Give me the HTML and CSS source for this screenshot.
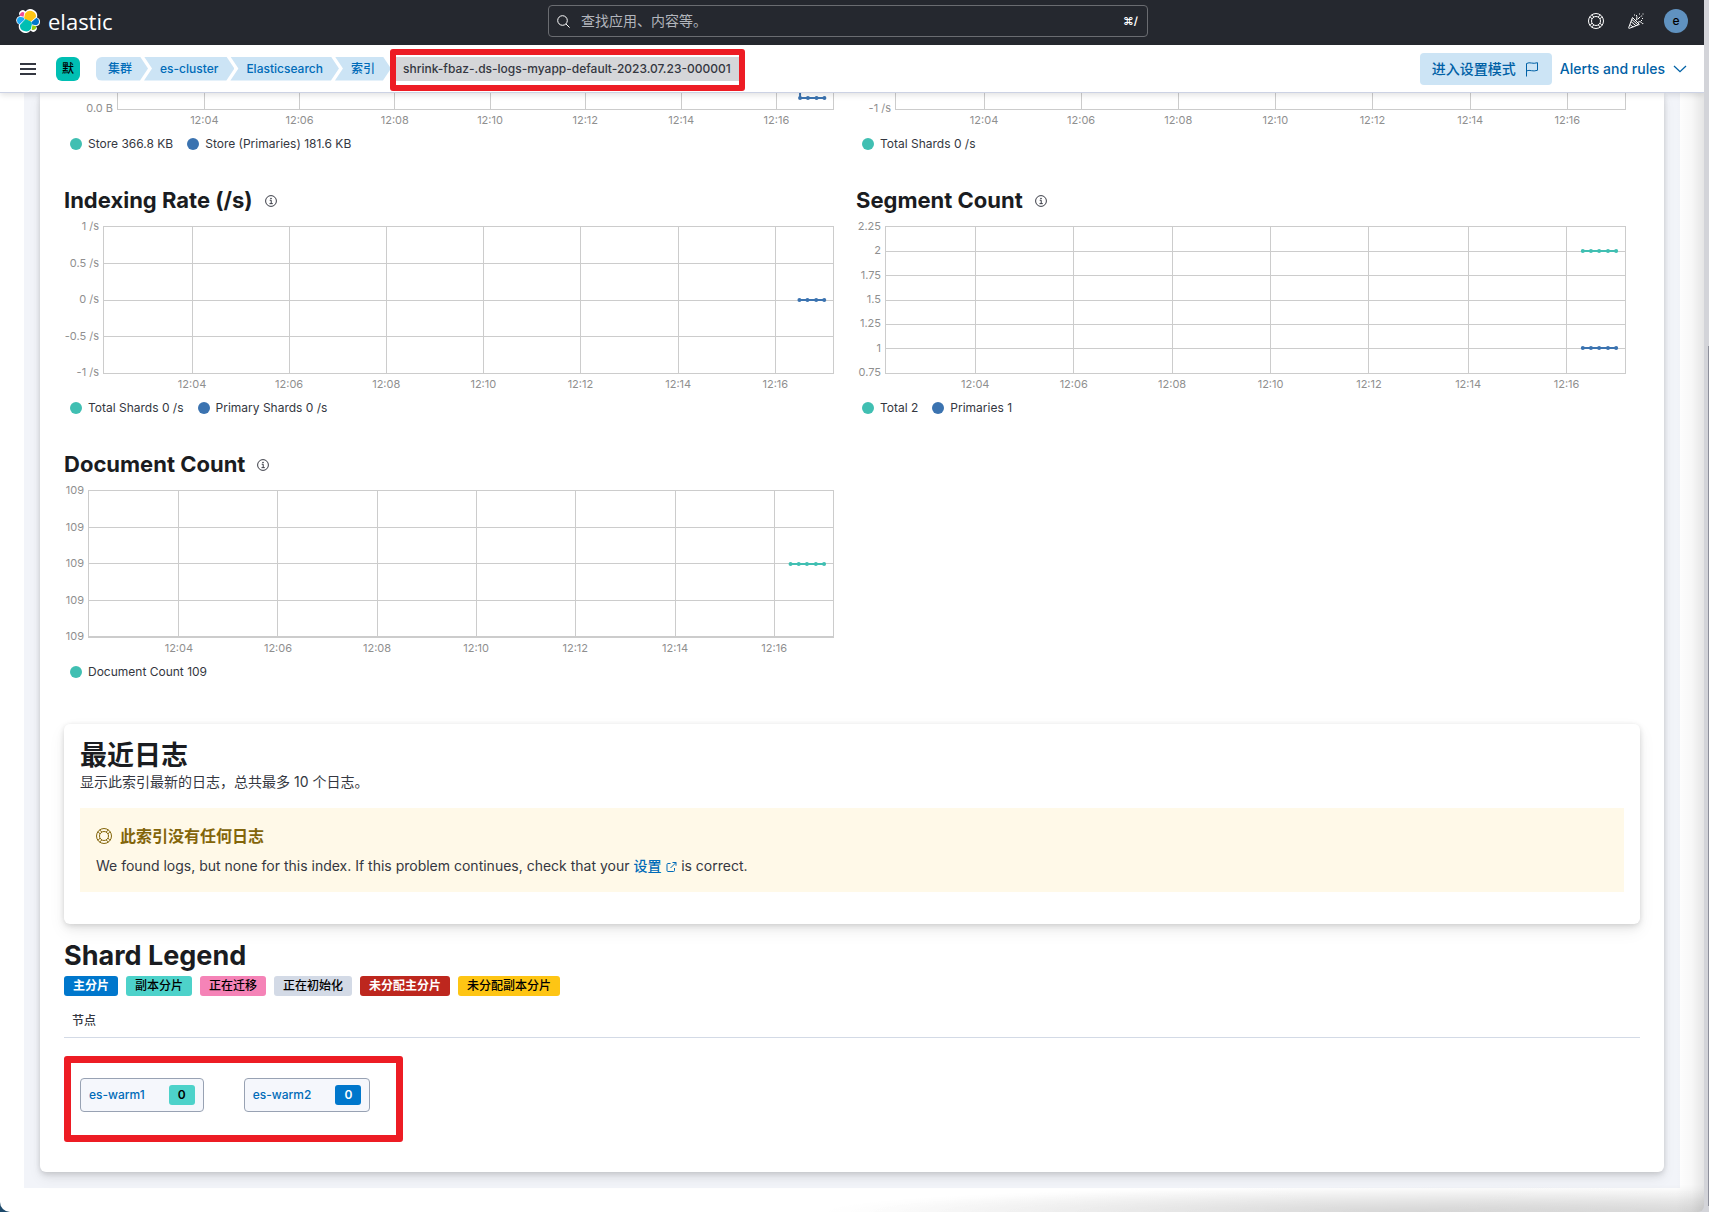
FILE: index.html
```html
<!DOCTYPE html>
<html lang="zh-CN">
<head>
<meta charset="utf-8">
<title>Elasticsearch - 索引</title>
<link rel="stylesheet" href="styles.css">
</head>
<body>
<svg class="defs" aria-hidden="true">
  <symbol id="info" viewBox="0 0 16 16"><path fill="none" stroke="currentColor" stroke-width="1.3" d="M8 .8a7.200 7.200 0 1 1 0 14.400A7.200 7.200 0 0 1 8 .8M6.3 7h2v4.4M6 11.5h4.4"/><circle cx="8" cy="4.6" r="1.1" fill="currentColor"/></symbol>
  <symbol id="help" viewBox="0 0 16 16"><g fill="none" stroke="currentColor"><circle cx="8" cy="8" r="7.5"/><circle cx="8" cy="8" r="4.500"/><path d="M4.200 6L2 3.700M6 4.200L3.700 2M11.800 6L14 3.700M10 4.200L12.300 2M4.200 10L2 12.300M6 11.800L3.700 14M11.800 10l2.200 2.300M10 11.800l2.300 2.200"/></g></symbol>
  <symbol id="vgrid" overflow="visible">
    <line x1="12.2%" x2="12.2%" y1="0" y2="148"/><line x1="25.5%" x2="25.5%" y1="0" y2="148"/><line x1="38.8%" x2="38.8%" y1="0" y2="148"/><line x1="52.1%" x2="52.1%" y1="0" y2="148"/><line x1="65.4%" x2="65.4%" y1="0" y2="148"/><line x1="78.8%" x2="78.8%" y1="0" y2="148"/><line x1="92.1%" x2="92.1%" y1="0" y2="148"/>
  </symbol>
</svg>

<div class="window">
<header class="topbar">
  <a class="brand" href="#">
    <svg width="24" height="24" viewBox="0 0 32 32" aria-hidden="true">
      <path fill="#fff" d="M32 16.8a6 6 0 0 0-4-5.6A9 9 0 0 0 12.500 3.200 4.600 4.600 0 0 0 5.400 9.200a6 6 0 0 0-1.400 11.500A9 9 0 0 0 19.500 28.800a4.600 4.600 0 0 0 7.100-5.900A6 6 0 0 0 32 16.800"/>
      <path fill="#fec514" d="M12.600 13.800l7 3.200 7.100-6.200a7.900 7.900 0 0 0-14.700-4.500l-1.200 6z"/>
      <path fill="#00bfb3" d="M5.300 21.200a7.900 7.900 0 0 0 14.800 4.500l1.200-6.100-1.600-3-7-3.200z"/>
      <path fill="#f04e98" d="M5.300 9.100l4.800 1.100 1-5.400a3.800 3.800 0 0 0-5.800 4.300"/>
      <path fill="#1ba9f5" d="M4.900 10.200a5.300 5.300 0 0 0-.2 10l6.700-6.100-1.200-2.700z"/>
      <path fill="#93c90e" d="M20.900 27.200a3.800 3.800 0 0 0 5.800-4.300l-4.800-1.100z"/>
      <path fill="#07c" d="M21.800 20.500l5.300 1.300a5.300 5.300 0 0 0 .2-10l-6.900 6z"/>
    </svg>
    <span>elastic</span>
  </a>
  <label class="search">
    <svg width="13" height="13" viewBox="0 0 13 13" fill="none" stroke="currentColor" aria-hidden="true"><circle cx="5.500" cy="5.500" r="4.800"/><path d="M9 9l3.600 3.600"/></svg>
    <input type="search" aria-label="查找" placeholder="查找应用、内容等。">
    <kbd>⌘/</kbd>
  </label>
  <div class="tools">
    <button type="button" aria-label="帮助"><svg width="16" height="16" aria-hidden="true"><use href="#help"/></svg></button>
    <button type="button" aria-label="新闻"><svg width="16" height="16" viewBox="0 0 16 16" fill="none" stroke="currentColor" aria-hidden="true"><path d="M4.500 4.500L.7 14.600c-.2.600.2.900.7.700l10-3.900zM3 8.600l5 4.200M2 11.500l3.200 2.600M3.800 6.400l6.300 5.700M6.500 6.500l3 3M8 7.500c1-1.500 1.300-3.500.3-5.500M10 9.200c1.500-.8 3-.6 3.500.5s1.500 1.200 2 .3M9.500 6.500l2.800-2.800"/><path d="M11 1h1M14.500 1h1M13.200 3h1M14 5.500h1M6 2h1M13 7.500h1"/></svg></button>
    <button type="button" class="avatar">e</button>
  </div>
</header>

<div class="subbar">
  <button type="button" class="menu" aria-label="菜单"><i></i><i></i><i></i></button>
  <button type="button" class="space">默</button>
  <nav class="crumbs" aria-label="路径">
    <a href="#">集群</a><a href="#">es-cluster</a><a href="#">Elasticsearch</a><a href="#">索引</a><span class="current">shrink-fbaz-.ds-logs-myapp-default-2023.07.23-000001</span>
  </nav>
  <div class="actions">
    <button type="button" class="setup">进入设置模式
      <svg width="16" height="16" viewBox="0 0 16 16" fill="none" stroke="currentColor" aria-hidden="true"><path d="M2.500 15.500v-13c3.500-2 6 1 11-.8v7.600c-5 1.800-7.500-1-11 .6"/></svg>
    </button>
    <button type="button" class="alerts">Alerts and rules
      <svg width="16" height="16" viewBox="0 0 16 16" fill="none" stroke="currentColor" stroke-width="1.300" aria-hidden="true"><path d="M2 5l6 5.700L14 5"/></svg>
    </button>
  </div>
</div>

<main class="page">
<div class="panel">
  <div class="charts">
    <section class="chart clipped w-store">
      <div class="ylabels"><span>0.0 B</span></div>
      <svg class="plot" aria-label="Store">
        <use href="#vgrid" class="grid" y="-131"/>
        <g class="grid"><path d="M0 -1V17"/><line x1="0" x2="100%" y1="16" y2="16"/><line x1="100%" x2="100%" y1="0" y2="17"/></g>
        <g class="blue"><line x1="95.4%" x2="95.4%" y1="0" y2="5"/><line x1="95.4%" x2="98.8%" y1="5" y2="5"/><circle cx="95.4%" cy="5" r="2"/><circle cx="96.5%" cy="5" r="2"/><circle cx="97.7%" cy="5" r="2"/><circle cx="98.8%" cy="5" r="2"/></g>
        <g class="xlabels"><text x="12.2%" y="31">12:04</text><text x="25.5%" y="31">12:06</text><text x="38.8%" y="31">12:08</text><text x="52.1%" y="31">12:10</text><text x="65.4%" y="31">12:12</text><text x="78.8%" y="31">12:14</text><text x="92.1%" y="31">12:16</text></g>
      </svg>
      <ul class="legend"><li>Store 366.8 KB</li><li class="b">Store (Primaries) 181.6 KB</li></ul>
    </section>
    <section class="chart clipped w-total">
      <div class="ylabels"><span>-1 /s</span></div>
      <svg class="plot" aria-label="Total Shards">
        <use href="#vgrid" class="grid" y="-131"/>
        <g class="grid"><path d="M0 -1V17"/><line x1="0" x2="100%" y1="16" y2="16"/><line x1="100%" x2="100%" y1="0" y2="17"/></g>
        <g class="xlabels"><text x="12.2%" y="31">12:04</text><text x="25.5%" y="31">12:06</text><text x="38.8%" y="31">12:08</text><text x="52.1%" y="31">12:10</text><text x="65.4%" y="31">12:12</text><text x="78.8%" y="31">12:14</text><text x="92.1%" y="31">12:16</text></g>
      </svg>
      <ul class="legend"><li>Total Shards 0 /s</li></ul>
    </section>

    <section class="chart w-index">
      <h2>Indexing Rate (/s) <svg width="12" height="12" aria-hidden="true"><use href="#info"/></svg></h2>
      <div class="ylabels"><span>1 /s</span><span>0.5 /s</span><span>0 /s</span><span>-0.5 /s</span><span>-1 /s</span></div>
      <svg class="plot" aria-label="Indexing Rate">
        <use href="#vgrid" class="grid"/>
        <g class="grid"><rect width="100%" height="147"/><line x1="0" x2="100%" y1="37" y2="37"/><line x1="0" x2="100%" y1="74" y2="74"/><line x1="0" x2="100%" y1="110" y2="110"/></g>
        <g class="blue"><line x1="95.4%" x2="98.8%" y1="74" y2="74"/><circle cx="95.4%" cy="74" r="2"/><circle cx="96.5%" cy="74" r="2"/><circle cx="97.7%" cy="74" r="2"/><circle cx="98.8%" cy="74" r="2"/></g>
        <g class="xlabels"><text x="12.2%" y="162">12:04</text><text x="25.5%" y="162">12:06</text><text x="38.8%" y="162">12:08</text><text x="52.1%" y="162">12:10</text><text x="65.4%" y="162">12:12</text><text x="78.8%" y="162">12:14</text><text x="92.1%" y="162">12:16</text></g>
      </svg>
      <ul class="legend"><li>Total Shards 0 /s</li><li class="b">Primary Shards 0 /s</li></ul>
    </section>
    <section class="chart w-segment">
      <h2>Segment Count <svg width="12" height="12" aria-hidden="true"><use href="#info"/></svg></h2>
      <div class="ylabels"><span>2.25</span><span>2</span><span>1.75</span><span>1.5</span><span>1.25</span><span>1</span><span>0.75</span></div>
      <svg class="plot" aria-label="Segment Count">
        <use href="#vgrid" class="grid"/>
        <g class="grid"><rect width="100%" height="147"/><line x1="0" x2="100%" y1="25" y2="25"/><line x1="0" x2="100%" y1="49" y2="49"/><line x1="0" x2="100%" y1="74" y2="74"/><line x1="0" x2="100%" y1="98" y2="98"/><line x1="0" x2="100%" y1="122" y2="122"/></g>
        <g class="green"><line x1="94.3%" x2="98.8%" y1="25" y2="25"/><circle cx="94.3%" cy="25" r="2"/><circle cx="95.4%" cy="25" r="2"/><circle cx="96.5%" cy="25" r="2"/><circle cx="97.7%" cy="25" r="2"/><circle cx="98.8%" cy="25" r="2"/></g>
        <g class="blue"><line x1="94.3%" x2="98.8%" y1="122" y2="122"/><circle cx="94.3%" cy="122" r="2"/><circle cx="95.4%" cy="122" r="2"/><circle cx="96.5%" cy="122" r="2"/><circle cx="97.7%" cy="122" r="2"/><circle cx="98.8%" cy="122" r="2"/></g>
        <g class="xlabels"><text x="12.2%" y="162">12:04</text><text x="25.5%" y="162">12:06</text><text x="38.8%" y="162">12:08</text><text x="52.1%" y="162">12:10</text><text x="65.4%" y="162">12:12</text><text x="78.8%" y="162">12:14</text><text x="92.1%" y="162">12:16</text></g>
      </svg>
      <ul class="legend"><li>Total 2</li><li class="b">Primaries 1</li></ul>
    </section>

    <section class="chart w-doc">
      <h2>Document Count <svg width="12" height="12" aria-hidden="true"><use href="#info"/></svg></h2>
      <div class="ylabels"><span>109</span><span>109</span><span>109</span><span>109</span><span>109</span></div>
      <svg class="plot" aria-label="Document Count">
        <use href="#vgrid" class="grid"/>
        <g class="grid"><rect width="100%" height="147"/><line x1="0" x2="100%" y1="37" y2="37"/><line x1="0" x2="100%" y1="73" y2="73"/><line x1="0" x2="100%" y1="110" y2="110"/><line x1="0" x2="100%" y1="146" y2="146"/></g>
        <g class="green"><line x1="94.3%" x2="98.8%" y1="74" y2="74"/><circle cx="94.3%" cy="74" r="2"/><circle cx="95.4%" cy="74" r="2"/><circle cx="96.5%" cy="74" r="2"/><circle cx="97.7%" cy="74" r="2"/><circle cx="98.8%" cy="74" r="2"/></g>
        <g class="xlabels"><text x="12.2%" y="162">12:04</text><text x="25.5%" y="162">12:06</text><text x="38.8%" y="162">12:08</text><text x="52.1%" y="162">12:10</text><text x="65.4%" y="162">12:12</text><text x="78.8%" y="162">12:14</text><text x="92.1%" y="162">12:16</text></g>
      </svg>
      <ul class="legend"><li>Document Count 109</li></ul>
    </section>
  </div>

  <section class="logs">
    <h1>最近日志</h1>
    <p class="sub">显示此索引最新的日志，总共最多 10 个日志。</p>
    <div class="callout">
      <h3><svg width="16" height="16" aria-hidden="true"><use href="#help"/></svg>此索引没有任何日志</h3>
      <p>We found logs, but none for this index. If this problem continues, check that your <a href="#">设置 <svg width="12" height="12" viewBox="0 0 12 12" fill="none" stroke="currentColor" aria-hidden="true"><path d="M5.500 2.500H3a1 1 0 0 0-1 1V9.500a1 1 0 0 0 1 1h5.500a1 1 0 0 0 1-1V7M7.500 1.500H11v3.200M11 1.500L5.500 7"/></svg></a> is correct.</p>
    </div>
  </section>

  <section class="shards">
    <h1>Shard Legend</h1>
    <div class="badges">
      <span class="badge primary">主分片</span><span class="badge replica">副本分片</span><span class="badge moving">正在迁移</span><span class="badge init">正在初始化</span><span class="badge lost">未分配主分片</span><span class="badge lostrep">未分配副本分片</span>
    </div>
    <table>
      <thead><tr><th scope="col">节点</th></tr></thead>
      <tbody><tr><td>
        <div class="nodes">
          <div class="node"><a href="#">es-warm1</a><span class="badge replica">0</span></div>
          <div class="node"><a href="#">es-warm2</a><span class="badge primary">0</span></div>
        </div>
      </td></tr></tbody>
    </table>
  </section>
</div>
</main>
</div>
</body>
</html>
```

FILE: styles.css
```css
* { box-sizing: border-box; }
html { background: linear-gradient(to right, #1d4a6b 50%, #d3d4d9 50%); }
body {
  margin: 0;
  font: 14px/20px Inter, "Noto Sans CJK SC", sans-serif;
  color: #343741;
}
h1, h2, h3, p, ul { margin: 0; padding: 0; }
a { color: #006bb8; text-decoration: none; }
button { border: 0; padding: 0; background: none; color: inherit; font: inherit; }
.defs { position: absolute; width: 0; height: 0; }

/* Edge of the neighbouring window, with its scroll thumb */
body::after {
  content: "";
  position: absolute;
  top: 346px;
  right: 0;
  bottom: 6px;
  width: 1px;
  background: #8e909b;
}

.window {
  position: relative;
  margin-right: 5px;
  min-height: 100vh;
  background: #fff;
  border-radius: 0 0 6px 10px;
  overflow: hidden;
}
.window::after {
  content: "";
  position: absolute;
  inset: 45px 0 0;
  pointer-events: none;
  background:
    linear-gradient(to left, rgba(0,0,0,.1), rgba(0,0,0,.03) 12px, transparent 28px),
    radial-gradient(ellipse 50% 28px at 100% 100%, rgba(0,0,0,.1), transparent),
    radial-gradient(ellipse 34% 26px at 82% 100%, rgba(0,0,0,.1), transparent);
}

/* Top bar */
.topbar {
  display: grid;
  grid-template-columns: 1fr 600px 1fr;
  align-items: center;
  height: 45px;
  padding: 0 24px 0 16px;
  background: #25282f;
  color: #fff;
}
.brand { display: flex; align-items: center; gap: 8px; height: 40px; margin-bottom: 4px; color: #fff; font: 22px/24px "Open Sans", sans-serif; }
.search {
  display: flex;
  align-items: center;
  gap: 11px;
  height: 32px;
  padding: 0 9px 0 8px;
  margin-bottom: 3px;
  border: 1px solid #6a6c71;
  border-radius: 4px;
}
.search input { flex: 1; border: 0; padding: 0; background: none; outline: 0; color: #fff; font: inherit; }
.search input::placeholder { color: #b2b5bc; opacity: 1; }
.search kbd { font: 600 11px/16px Inter, "DejaVu Sans", sans-serif; }
.tools { display: flex; justify-content: flex-end; align-items: center; gap: 24px; height: 42px; margin: 0 -8px 3px 0; }
.tools svg { display: block; }
.tools .avatar { width: 24px; height: 24px; margin-left: -4px; border-radius: 50%; background: #6092c0; color: #000; font-size: 12px; font-weight: 500; }

/* Breadcrumb bar */
.subbar {
  position: relative;
  z-index: 1;
  display: flex;
  align-items: center;
  height: 48px;
  padding: 0 16px 0 20px;
  background: #fff;
  border-bottom: 1px solid #ccd2e4;
  box-shadow: 0 2px 6px rgba(0,0,0,.12);
}
.menu { display: grid; gap: 3px; width: 16px; margin-right: 20px; }
.menu i { height: 2px; background: #343741; }
.space { width: 24px; height: 24px; margin-right: 16px; border-radius: 6px; background: #00bfb3; color: #000; font-size: 12px; font-weight: 500; }
.crumbs { display: flex; font-size: 12px; line-height: 24px; font-weight: 500; }
.crumbs a {
  margin-left: -4px;
  padding: 0 16px;
  background: #cce4f5;
  clip-path: polygon(0 0, calc(100% - 8px) 0, 100% 50%, calc(100% - 8px) 100%, 0 100%, 8px 50%);
}
.crumbs a:first-child {
  margin-left: 0;
  padding-left: 12px;
  border-radius: 6px 0 0 6px;
  clip-path: polygon(0 0, calc(100% - 8px) 0, 100% 50%, calc(100% - 8px) 100%, 0 100%);
}
.current { position: relative; padding: 0 8px 0 12px; background: #d5d6d9; }
.current::after { content: ""; position: absolute; inset: -8px -6px -10px -1px; border: 6px solid #ed1c24; border-radius: 3px; }
.actions { display: flex; align-items: center; gap: 8px; margin-left: auto; color: #0061a6; font-weight: 500; }
.actions button { display: flex; align-items: center; gap: 8px; }
.actions .alerts { gap: 7px; }
.actions .setup { height: 32px; padding: 0 12px; border-radius: 4px; background: #cce4f5; }

/* Page */
.page { margin: 0 24px; padding: 0 16px 16px; background: #f2f4f9; }
.panel {
  padding: 0 24px 30px;
  background: #fff;
  border-radius: 0 0 6px 6px;
  box-shadow: 0 1px 5px rgba(0,0,0,.1), 0 4px 7px rgba(0,0,0,.07), 0 7px 14px rgba(0,0,0,.06);
}

/* Charts */
.charts { display: grid; grid-template-columns: 1fr 1fr; column-gap: 23px; padding-right: 15px; }
.chart { display: grid; grid-template: 46px 175px 43px / var(--axis) 1fr; }
.chart.clipped { grid-template-rows: 44px 43px; }
.w-store { --axis: 53px; }
.w-total, .w-index { --axis: 39px; }
.w-segment { --axis: 29px; }
.w-doc { --axis: 24px; }
.chart h2 {
  grid-column: 1 / -1;
  display: flex;
  align-items: center;
  gap: 12px;
  padding-bottom: 6px;
  color: #1a1c21;
  font-size: 22px;
  line-height: 28px;
}
.chart h2 svg { margin-top: 2px; color: #343741; }
.ylabels {
  display: flex;
  flex-direction: column;
  justify-content: space-between;
  height: 158px;
  margin-top: -6px;
  padding-right: 4px;
  color: #8f8f8f;
  font-size: 11px;
  line-height: 12px;
  text-align: right;
  white-space: nowrap;
}
.clipped .ylabels { height: 15px; margin-top: 6px; justify-content: flex-end; }
.plot { display: block; width: 100%; height: 170px; overflow: visible; }
.clipped .plot { height: 36px; clip-path: inset(0 -2px -2px -2px); }
.grid { fill: none; stroke: #ccc; stroke-width: 1; shape-rendering: crispEdges; }
.blue { fill: #3b73b0; stroke: #3b73b0; stroke-width: 2; }
.green { fill: #40bfb2; stroke: #40bfb2; stroke-width: 2; }
.plot circle { stroke: none; }
.xlabels { fill: #8f8f8f; font-size: 11px; text-anchor: middle; }
.legend { grid-column: 1 / -1; display: flex; gap: 14px; padding-left: 6px; list-style: none; font-size: 12px; line-height: 14px; }
.legend li { display: flex; align-items: center; gap: 6px; height: 14px; }
.legend li::before { content: ""; width: 12px; height: 12px; border-radius: 50%; background: #40bfb2; }
.legend .b::before { background: #3b73b0; }

/* Logs */
h1 { color: #1a1c21; font-size: 27px; line-height: 32px; font-weight: 700; }
.logs {
  margin-top: 16px;
  padding: 16px 16px 32px;
  border-radius: 6px;
  box-shadow: 0 1px 5px rgba(0,0,0,.1), 0 4px 8px rgba(0,0,0,.07), 0 7px 18px rgba(0,0,0,.06);
}
.callout { margin-top: 16px; padding: 16px; background: #fff9e8; }
.callout h3 { display: flex; align-items: center; gap: 8px; margin-bottom: 8px; color: #83650a; font-size: 16px; line-height: 24px; font-weight: 600; }
.callout a { font-weight: 500; }
.callout a svg { vertical-align: -2px; }

/* Shards */
.shards { padding-top: 16px; }
.badges { display: flex; gap: 8px; margin-top: 4px; }
.badge { padding: 0 9px; border-radius: 3px; font-size: 12px; line-height: 20px; font-weight: 500; color: #000; }
.primary { background: #0077cc; color: #fff; font-weight: 600; }
.replica { background: #4dd2ca; }
.moving { background: #f583b7; }
.init { background: #d3dae6; }
.lost { background: #bd271e; color: #fff; font-weight: 600; }
.lostrep { background: #fec514; }
table { width: 100%; margin-top: 8px; border-collapse: collapse; }
th { height: 33px; padding: 2px 8px 0; border-bottom: 1px solid #d3dae6; font-size: 12px; font-weight: 500; text-align: left; }
td { padding: 18px 0 0; }
.nodes { display: flex; gap: 40px; width: fit-content; height: 86px; padding: 15px 26px 0 9px; border: 7px solid #ed1c24; border-radius: 3px; }
.node { display: flex; align-items: center; gap: 24px; height: 34px; padding: 0 8px; border: 1px solid #98a2b3; border-radius: 4px; background: #f5f7fc; font-size: 12px; font-weight: 500; }
.node .badge { font-weight: 600; }
```
